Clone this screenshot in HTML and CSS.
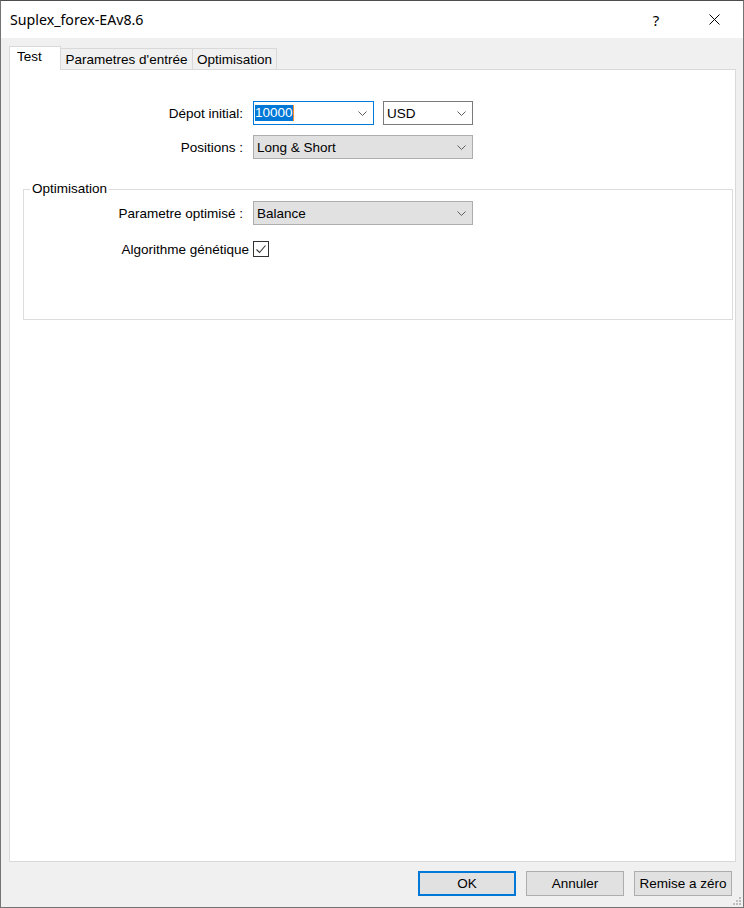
FILE: index.html
```html
<!DOCTYPE html>
<html lang="fr">
<head>
<meta charset="utf-8">
<title>Suplex_forex-EAv8.6</title>
<link rel="stylesheet" href="styles.css">
</head>
<body>
<div class="window">
  <div class="titlebar">
    <span class="title">Suplex_forex-EAv8.6</span>
    <span class="cap help">?</span>
    <span class="cap close"><svg width="11" height="11" viewBox="0 0 11 11"><path d="M0.5 0.5 L10.5 10.5 M10.5 0.5 L0.5 10.5" stroke="#000" stroke-width="1" fill="none"/></svg></span>
  </div>
  <div class="client">
    <div class="tabs">
      <div class="tab active">Test</div>
      <div class="tab t2">Parametres d'entrée</div>
      <div class="tab t3">Optimisation</div>
    </div>
    <div class="panel">
      <div class="row">
        <span class="lbl">Dépot initial:</span>
        <div class="combo c-depot"><span class="sel">10000</span><svg class="chev" width="9" height="5" viewBox="0 0 9 5"><path d="M0.5 0.5 L4.5 4.5 L8.5 0.5" stroke="#5f5f5f" fill="none"/></svg></div>
        <div class="combo c-usd"><span class="val">USD</span><svg class="chev" width="9" height="5" viewBox="0 0 9 5"><path d="M0.5 0.5 L4.5 4.5 L8.5 0.5" stroke="#5f5f5f" fill="none"/></svg></div>
      </div>
      <div class="row row2">
        <span class="lbl">Positions :</span>
        <div class="combo c-gray"><span class="val">Long &amp; Short</span><svg class="chev" width="9" height="5" viewBox="0 0 9 5"><path d="M0.5 0.5 L4.5 4.5 L8.5 0.5" stroke="#5f5f5f" fill="none"/></svg></div>
      </div>
      <fieldset class="group">
        <legend>Optimisation</legend>
        <div class="row grow">
          <span class="lbl glbl">Parametre optimisé :</span>
          <div class="combo c-gray"><span class="val">Balance</span><svg class="chev" width="9" height="5" viewBox="0 0 9 5"><path d="M0.5 0.5 L4.5 4.5 L8.5 0.5" stroke="#5f5f5f" fill="none"/></svg></div>
        </div>
        <div class="row crow">
          <span class="lbl clbl">Algorithme génétique</span>
          <span class="check"><svg width="14" height="14" viewBox="0 0 14 14"><path d="M2.5 7.5 L5.5 10.5 L11.5 3.5" stroke="#333" stroke-width="1.1" fill="none"/></svg></span>
        </div>
      </fieldset>
    </div>
    <div class="footer">
      <button class="btn default">OK</button>
      <button class="btn">Annuler</button>
      <button class="btn">Remise a zéro</button>
    </div>
  </div>
  <svg class="grip" width="9" height="9" viewBox="0 0 9 9"><rect x="6" y="0" width="2" height="2" fill="#bdbdbd"/><rect x="3" y="3" width="2" height="2" fill="#bdbdbd"/><rect x="6" y="3" width="2" height="2" fill="#bdbdbd"/><rect x="0" y="6" width="2" height="2" fill="#bdbdbd"/><rect x="3" y="6" width="2" height="2" fill="#bdbdbd"/><rect x="6" y="6" width="2" height="2" fill="#bdbdbd"/></svg>
</div>
</body>
</html>
```
FILE: styles.css
```css
* { box-sizing: border-box; }
html, body { margin: 0; padding: 0; }
body {
  width: 744px;
  height: 908px;
  overflow: hidden;
  background: #f0f0f0;
  font-family: "Liberation Sans", Arial, sans-serif;
  font-size: 13.5px;
  color: #000;
}
.window {
  position: relative;
  width: 744px;
  height: 908px;
  border: 1px solid #747474;
  border-top-color: #4d4d4d;
  display: flex;
  flex-direction: column;
  background: #f0f0f0;
}
.titlebar {
  height: 37px;
  flex: none;
  background: #fff;
  display: flex;
  align-items: center;
  padding-left: 9px;
  font-family: "Noto Sans", "Open Sans", sans-serif;
  font-size: 14.2px;
}
.title { flex: 1; }
.cap {
  width: 58px;
  height: 37px;
  display: flex;
  align-items: center;
  justify-content: center;
}
.help { font-size: 15px; }
.client {
  flex: 1;
  display: flex;
  flex-direction: column;
  padding: 8px 7px 0 8px;
}
.tabs {
  height: 23px;
  flex: none;
  display: flex;
  align-items: flex-end;
}
.tab {
  height: 21px;
  border: 1px solid #d9d9d9;
  border-bottom: none;
  background: #f0f0f0;
  text-align: center;
  line-height: 19px;
  padding-top: 1px;
  white-space: nowrap;
}
.tab.active {
  position: relative;
  z-index: 1;
  width: 52px;
  height: 24px;
  margin-bottom: -1px;
  background: #fff;
  text-align: left;
  padding: 1px 0 0 7px;
  line-height: 18px;
}
.t2 { width: 133px; margin-left: -1px; }
.t3 { width: 85px; margin-left: -1px; }
.panel {
  flex: 1;
  background: #fff;
  border: 1px solid #d9d9d9;
  padding-top: 31px;
}
.row {
  display: flex;
  align-items: center;
  height: 24px;
}
.row2 { margin-top: 10px; }
.lbl {
  width: 233px;
  margin-right: 10px;
  text-align: right;
  white-space: nowrap;
}
.combo {
  position: relative;
  height: 24px;
  border: 1px solid #adadad;
  display: flex;
  align-items: center;
  white-space: nowrap;
}
.c-depot {
  width: 121px;
  border-color: #0078d7;
  background: #fff;
}
.c-usd {
  width: 90px;
  margin-left: 9px;
  border-color: #7a7a7a;
  background: #fff;
  padding-left: 3px;
}
.c-gray {
  width: 220px;
  background: #e1e1e1;
  padding-left: 3px;
}
.sel {
  margin-left: 1px;
  height: 16px;
  line-height: 16px;
  background: #0078d7;
  color: #fff;
  border-right: 1px solid #ff8a2a;
}
.chev {
  position: absolute;
  right: 6px;
  top: 9px;
}
.group {
  margin: 23px 2px 0 13px;
  padding: 0 0 62px 0;
  border: 1px solid #dcdcdc;
  min-width: 0;
}
.group legend {
  margin-left: 6px;
  padding: 0 2px;
  line-height: 14px;
}
.grow { margin-top: 5px; }
.glbl { width: 219px; }
.crow { margin-top: 16px; height: 16px; }
.clbl { width: 225px; margin-right: 4px; }
.check {
  width: 16px;
  height: 16px;
  border: 1px solid #333;
  background: #fff;
  display: flex;
}
.footer {
  height: 45px;
  flex: none;
  display: flex;
  justify-content: flex-end;
  align-items: flex-start;
  gap: 10px;
  padding: 9px 4px 0 0;
}
.btn {
  width: 98px;
  height: 25px;
  margin: 0;
  padding: 0;
  border: 1px solid #adadad;
  background: #e1e1e1;
  font-family: "Liberation Sans", Arial, sans-serif;
  font-size: 13.5px;
  color: #000;
}
.btn.default { border: 2px solid #0078d7; }
.grip {
  position: absolute;
  right: 1px;
  bottom: 1px;
}
```
